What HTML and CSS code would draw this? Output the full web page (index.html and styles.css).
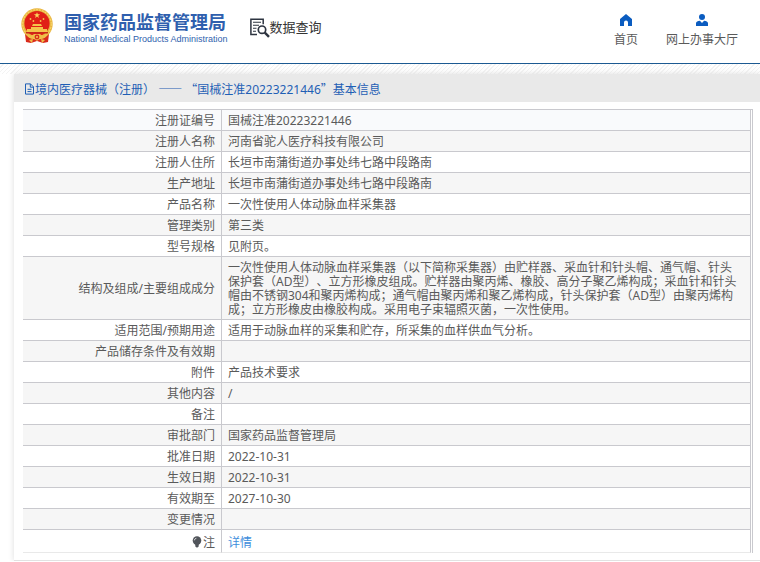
FILE: index.html
```html
<!DOCTYPE html>
<html lang="zh-CN">
<head>
<meta charset="utf-8">
<meta name="viewport" content="width=device-width, initial-scale=1">
<title>国家药品监督管理局 数据查询</title>
<link rel="stylesheet" href="styles.css">
</head>
<body>
<header class="site-header">
  <a class="brand" href="#">
    <svg class="emblem" viewBox="0 0 34 36" aria-hidden="true">
      <path fill="#d92a1c" d="M5 26h24l-1 8-5 1-6-2-6 2-5-1z"/>
      <circle cx="17" cy="16" r="15.7" fill="#e9b43f"/>
      <circle cx="17" cy="16" r="14.3" fill="none" stroke="#f6d468" stroke-width="1.2" stroke-dasharray="2 1"/>
      <circle cx="17" cy="15.5" r="12.6" fill="#e01f16"/>
      <path fill="#fbd65c" d="M17 4.2l.8 2.1h2.3l-1.9 1.4.8 2.3-2-1.4-2 1.4.8-2.3-1.9-1.4h2.3z"/>
      <g fill="#f5c34b">
        <circle cx="10.5" cy="11" r=".9"/><circle cx="13.4" cy="13" r=".9"/>
        <circle cx="20.6" cy="13" r=".9"/><circle cx="23.5" cy="11" r=".9"/>
        <path d="M12 18l1-2h8l1 2zM11 19h12v2h4v3H7v-3h4z"/>
      </g>
      <path fill="#c9271b" d="M6 24h22v1.5H6z"/>
      <path fill="#f0bd48" d="M7 27c4 1 6 0 7-1h6c1 1 3 2 7 1-2 4-5 4-7 3l-3 3-3-3c-2 1-5 1-7-3z"/>
      <circle cx="17" cy="29" r="2.4" fill="#d92a1c"/>
      <circle cx="17" cy="29" r="1.1" fill="#f5c34b"/>
      <path fill="#f0bd48" d="M9 32l4-1-1 4zM25 32l-4-1 1 4z"/>
    </svg>
    <span class="brand-text">
      <span class="brand-cn">国家药品监督管理局</span>
      <span class="brand-en">National Medical Products Administration</span>
    </span>
  </a>
  <div class="section-name">
    <svg class="section-icon" viewBox="0 0 20 20" aria-hidden="true" fill="none" stroke="#2d3440">
      <path stroke-width="1.5" d="M7 16.5H.9V1.2h12.3v5"/>
      <path stroke-width="1.1" d="M3 4.3h8M3 7.3h6M3 10.3h3.5M3 13.3h3"/>
      <circle cx="12" cy="11.7" r="3.7" stroke-width="1.7"/>
      <path stroke-width="2.4" d="M14.8 14.6l4.2 4.2"/>
    </svg>
    <span>数据查询</span>
  </div>
  <nav class="top-nav">
    <a href="#">
      <svg class="nav-icon" viewBox="0 0 12 12" aria-hidden="true"><path fill="#0b5cc0" d="M6 0l6 5v7H8V8.6a2 2 0 0 0-4 0V12H0V5z"/></svg>
      <span>首页</span>
    </a>
    <a href="#">
      <svg class="nav-icon" viewBox="0 0 12 12" aria-hidden="true"><circle cx="6" cy="3" r="3" fill="#0b5cc0"/><path fill="#0b5cc0" d="M0 12V9.3C0 7.8 1.8 7 3.9 6.8L6 9l2.1-2.2c2.1.2 3.9 1 3.9 2.5V12z"/></svg>
      <span>网上办事大厅</span>
    </a>
  </nav>
</header>
<div class="hatch"></div>
<main class="panel">
  <h1 class="panel-title">
    <svg class="doc-icon" viewBox="0 0 11 12" aria-hidden="true" fill="none" stroke="#1f5fb5"><path d="M1.5.9h5l3 3v7.2h-8zM6.3.9v3.3h3.2M3.5 6.3h4M3.5 8.6h4"/></svg>
    <span>境内医疗器械（注册） <span class="full">——</span> <span class="full">“</span>国械注准20223221446<span class="full">”</span>基本信息</span>
  </h1>
  <div class="panel-body">
    <table class="info">
      <tbody>
        <tr><th scope="row">注册证编号</th><td>国械注准20223221446</td></tr>
        <tr><th scope="row">注册人名称</th><td>河南省驼人医疗科技有限公司</td></tr>
        <tr><th scope="row">注册人住所</th><td>长垣市南蒲街道办事处纬七路中段路南</td></tr>
        <tr><th scope="row">生产地址</th><td>长垣市南蒲街道办事处纬七路中段路南</td></tr>
        <tr><th scope="row">产品名称</th><td>一次性使用人体动脉血样采集器</td></tr>
        <tr><th scope="row">管理类别</th><td>第三类</td></tr>
        <tr><th scope="row">型号规格</th><td>见附页。</td></tr>
        <tr><th scope="row">结构及组成/主要组成成分</th><td>一次性使用人体动脉血样采集器（以下简称采集器）由贮样器、采血针和针头帽、通气帽、针头保护套（AD型）、立方形橡皮组成。贮样器由聚丙烯、橡胶、高分子聚乙烯构成；采血针和针头帽由不锈钢304和聚丙烯构成；通气帽由聚丙烯和聚乙烯构成，针头保护套（AD型）由聚丙烯构成；立方形橡皮由橡胶构成。采用电子束辐照灭菌，一次性使用。</td></tr>
        <tr><th scope="row">适用范围/预期用途</th><td>适用于动脉血样的采集和贮存，所采集的血样供血气分析。</td></tr>
        <tr><th scope="row">产品储存条件及有效期</th><td></td></tr>
        <tr><th scope="row">附件</th><td>产品技术要求</td></tr>
        <tr><th scope="row">其他内容</th><td>/</td></tr>
        <tr><th scope="row">备注</th><td></td></tr>
        <tr><th scope="row">审批部门</th><td>国家药品监督管理局</td></tr>
        <tr><th scope="row">批准日期</th><td>2022-10-31</td></tr>
        <tr><th scope="row">生效日期</th><td>2022-10-31</td></tr>
        <tr><th scope="row">有效期至</th><td>2027-10-30</td></tr>
        <tr><th scope="row">变更情况</th><td></td></tr>
        <tr class="note"><th scope="row"><svg class="bulb" viewBox="0 0 10 12" aria-hidden="true"><circle cx="5" cy="4.6" r="4.3" fill="#51555b"/><path fill="#51555b" d="M3.3 8h3.4v2.6L5 11.8l-1.7-1.2z"/><path d="M2.4 4.3c.1-1 .8-1.8 1.9-2" fill="none" stroke="#fff" stroke-width=".9"/></svg>注</th><td><a href="#">详情</a></td></tr>
      </tbody>
    </table>
  </div>
</main>
</body>
</html>
```
FILE: styles.css
```css
* { box-sizing: border-box; }

body {
  margin: 0;
  background: #fff;
  color: #5a5a5a;
  font: 12px/14px "Noto Sans", "Noto Sans CJK SC", sans-serif;
  text-spacing-trim: space-all;
}

a { color: inherit; text-decoration: none; }
svg { display: block; flex: none; }

.site-header {
  display: flex;
  align-items: flex-start;
  height: 64px;
  padding: 8px 22px 0 20px;
  border-bottom: 1px solid #1c5a92;
}

.brand { display: flex; gap: 10px; color: #2f5fae; }
.emblem { width: 34px; height: 36px; }
.brand-text { display: flex; flex-direction: column; padding-top: 4px; }
.brand-cn { font-size: 18px; line-height: 20px; font-weight: 700; white-space: nowrap; }
.brand-en { font: 9px/14px "Liberation Sans", sans-serif; white-space: nowrap; }

.section-name {
  display: flex;
  margin: 10px 0 0 22px;
  color: #333;
  font-size: 13px;
  line-height: 18px;
  white-space: nowrap;
}
.section-icon { width: 20px; height: 20px; }

.top-nav { display: flex; gap: 28px; margin-left: auto; padding-top: 6px; }
.top-nav a { display: flex; flex-direction: column; align-items: center; gap: 7px; white-space: nowrap; }
.nav-icon { width: 12px; height: 12px; }

.hatch {
  height: 10px;
  background: repeating-linear-gradient(135deg, #fff 0 2px, #f3f3f3 2px 3px);
}

.panel {
  margin-left: 14px;
  background: #fff;
  border-bottom: 1px solid #e2e2e2;
  box-shadow: 0 0 6px #ddd;
}
.panel-title {
  display: flex;
  align-items: center;
  height: 28px;
  margin: 0;
  padding: 2px 10px 0;
  background: #e9e9e9;
  color: #1f5fb5;
  font-size: 12px;
  font-weight: 400;
}
.doc-icon { width: 11px; height: 12px; }
.full { font-family: "Noto Sans CJK SC", sans-serif; }

.panel-body { padding: 7px 7px 7px 9px; }
.info {
  width: 100%;
  border-right: 1px solid #c9c9ce;
  border-spacing: 0;
  border-top: 1px solid #c9c9ce;
  padding-right: 1px;
}
.info th, .info td {
  padding: 4px 6px 2px;
  border-right: 1px solid #c9c9ce;
  border-bottom: 1px solid #c9c9ce;
  font-weight: 400;
  height: 21px;
}
.info td { padding-right: 8px; }
.info th { width: 199px; text-align: right; }
.info tr:first-child { background: #f9fafc; }
.info tr:nth-child(even) { background: #f6f6f6; }
.info .note th, .info .note td { height: 23px; padding-top: 5px; border-bottom-color: #e9e9e9; }
.info .note a { color: #3e8edc; }
.bulb { display: inline-block; width: 10px; height: 12px; margin-right: 1px; vertical-align: -1px; }
```
